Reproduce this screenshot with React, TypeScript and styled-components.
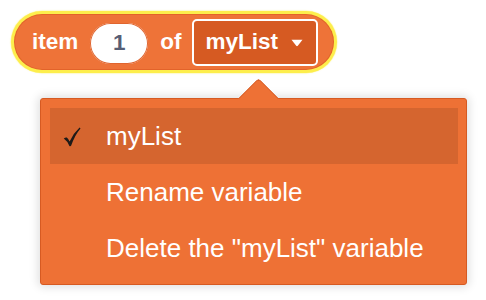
import React from "react";
import styled, { createGlobalStyle } from "styled-components";

const Global = createGlobalStyle`
  html, body { margin: 0; padding: 0; background: #ffffff; }
  body { font-family: "Liberation Sans", Arial, Helvetica, sans-serif; }
`;

const Page = styled.div`
  position: relative;
  width: 486px;
  height: 300px;
  padding: 15px 0 0 15px;
  box-sizing: border-box;
`;

const Block = styled.div`
  display: inline-flex;
  align-items: center;
  height: 54px;
  padding: 0 15px 0 17px;
  box-sizing: border-box;
  border-radius: 27px;
  background: #ee7338;
  box-shadow: 0 0 0 1px #e2632a, 0 0 0 4px #fdee4c, 0 0 1px 4.5px rgba(253, 238, 76, 0.5);
  color: #ffffff;
  font-weight: 700;
  font-size: 22.5px;
`;

const Label = styled.span<{ $gap: number }>`
  margin-right: ${(p) => p.$gap}px;
  line-height: 1;
`;

const NumberInput = styled.div`
  width: 58px;
  height: 41px;
  margin-right: 12px;
  margin-top: 2px;
  border-radius: 21px;
  background: #ffffff;
  color: #575e75;
  display: flex;
  align-items: center;
  justify-content: center;
  font-size: 22.5px;
  font-weight: 700;
  box-shadow: inset 0 0 0 1px #e0652f;
`;

const Dropdown = styled.div`
  width: 126px;
  height: 47px;
  box-sizing: border-box;
  border: 2px solid #ffffff;
  border-radius: 5px;
  background: #d65a22;
  display: flex;
  align-items: center;
  padding: 0 12px 0 12px;
  gap: 13px;
`;

const Caret = styled.svg`
  width: 12px;
  height: 8px;
  margin-top: 1px;
`;

const Menu = styled.div`
  position: relative;
  margin: 29px 0 0 25px;
  width: 427px;
  box-sizing: border-box;
  background: #ee7135;
  border: 1px solid #d65a22;
  border-radius: 3px;
  padding: 9px 8px 8px 9px;
  box-shadow: 0 0 10px 2px rgba(0, 0, 0, 0.13);
`;

const Arrow = styled.div`
  position: absolute;
  top: -15px;
  left: 203px;
  width: 28px;
  height: 28px;
  background: #ee7135;
  border-top: 1px solid #d65a22;
  border-left: 1px solid #d65a22;
  border-top-left-radius: 4px;
  transform: rotate(45deg);
`;

const Row = styled.div<{ $selected?: boolean }>`
  position: relative;
  height: 56px;
  display: flex;
  align-items: center;
  padding-left: 56px;
  background: ${(p) => (p.$selected ? "#d5652f" : "transparent")};
  color: #ffffff;
  font-size: 26px;
  font-weight: 400;
  white-space: nowrap;
`;

const Check = styled.svg`
  position: absolute;
  left: 13px;
  top: 19px;
  width: 18px;
  height: 20px;
`;

export default function App() {
  return (
    <>
      <Global />
      <Page>
        <Block>
          <Label $gap={12}>item</Label>
          <NumberInput>1</NumberInput>
          <Label $gap={10}>of</Label>
          <Dropdown>
            <span>myList</span>
            <Caret viewBox="0 0 12 8">
              <path d="M0.5 0.8 L11.5 0.8 L6.8 6.8 Q6 7.6 5.2 6.8 Z" fill="#ffffff" />
            </Caret>
          </Dropdown>
        </Block>
        <Menu>
          <Arrow />
          <Row $selected>
            <Check viewBox="0 0 18 20">
              <path
                d="M0.8 11.6 Q2.5 10 3.8 10.5 Q5.2 11.8 6.6 14.4 Q10.5 6.2 16.6 0.6 L17.5 1.4 Q11.8 8 8.2 18.6 Q7.4 19.6 6.4 18.9 Q4.6 14.4 0.8 11.6 Z"
                fill="#1e1a18"
              />
            </Check>
            myList
          </Row>
          <Row>Rename variable</Row>
          <Row>Delete the "myList" variable</Row>
        </Menu>
      </Page>
    </>
  );
}
